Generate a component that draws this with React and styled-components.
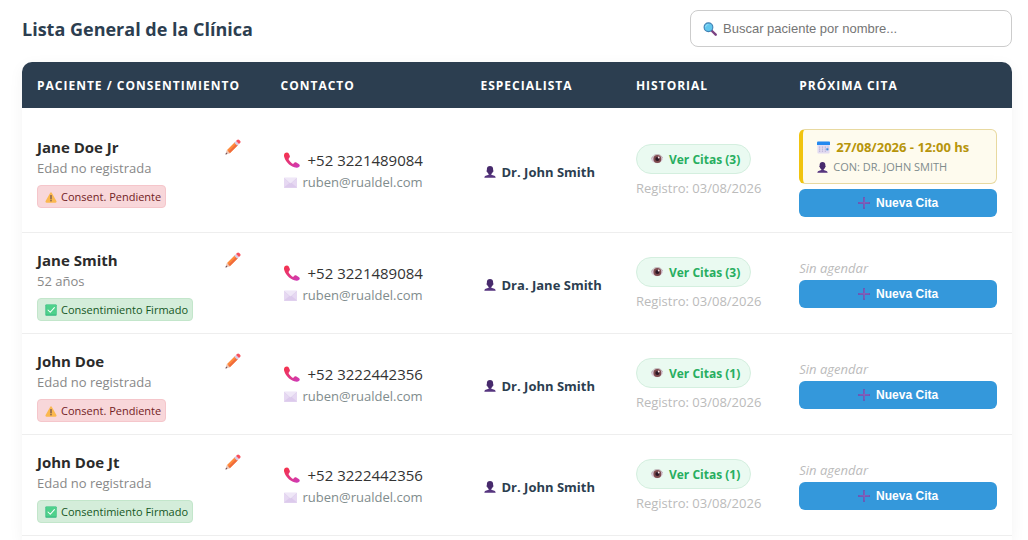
import React, { useId, useState } from 'react';
import styled, { createGlobalStyle, css } from 'styled-components';

const GlobalStyle = createGlobalStyle`
  *, *::before, *::after { box-sizing: border-box; }
  body {
    margin: 0;
    background: #fff;
    color: #333;
    font-family: 'Open Sans', 'Noto Sans', sans-serif;
    font-size: 13px;
  }
  button, input { margin: 0; font-family: 'Liberation Sans', Arial, sans-serif; }
`;

const Page = styled.main`
  display: flex;
  flex-direction: column;
  min-height: 100vh;
  padding: 10px 16px 0 22px;
`;

const TopBar = styled.header`
  display: flex;
  justify-content: space-between;
  align-items: center;
  margin-bottom: 15px;
`;

const Title = styled.h1`
  margin: 0;
  font-size: 18px;
  line-height: 26px;
  font-weight: 700;
  color: #2c3e50;
`;

const SearchBox = styled.label`
  display: flex;
  align-items: center;
  gap: 6px;
  width: 322px;
  height: 37px;
  padding: 0 12px;
  border: 1px solid #ccc;
  border-radius: 8px;
  background: #fff;
`;

const SearchInput = styled.input`
  flex: 1;
  min-width: 0;
  padding: 0;
  border: 0;
  outline: 0;
  background: transparent;
  font-size: 13px;
  color: #333;
  &::placeholder { color: #757575; opacity: 1; }
`;

const Card = styled.section`
  flex: 1;
  border-radius: 10px 10px 0 0;
  background: #fff;
  box-shadow: 0 4px 15px rgba(0, 0, 0, 0.05);
`;

const Table = styled.table`
  width: 100%;
  table-layout: fixed;
  border-collapse: separate;
  border-spacing: 0;
`;

const HeadCell = styled.th`
  width: ${(p) => p.$width};
  height: 46px;
  padding: 0 15px;
  text-align: left;
  font-size: 12px;
  font-weight: 700;
  letter-spacing: 1px;
  text-transform: uppercase;
  color: #fff;
  background: #2c3e50;
  white-space: nowrap;
  &:first-child { border-top-left-radius: 10px; }
  &:last-child { border-top-right-radius: 10px; }
`;

const Cell = styled.td`
  padding: 12px 15px;
  vertical-align: middle;
  border-bottom: 1px solid #eee;
  white-space: nowrap;
`;

const PatientHead = styled.div`
  display: flex;
  justify-content: space-between;
  align-items: center;
  padding: 4px 10px 0 0;
`;

const PatientName = styled.strong`
  font-size: 15px;
  line-height: 22px;
  color: #2b2b2b;
`;

const IconButton = styled.button`
  display: flex;
  padding: 0;
  border: 0;
  background: none;
  cursor: pointer;
`;

const Age = styled.div`
  margin-bottom: 7px;
  line-height: 20px;
  color: #888;
`;

const badgeTones = {
  signed: css`color: #155724; background: #d4edda; border-color: #c3e6cb;`,
  pending: css`color: #721c24; background: #f8d7da; border-color: #f5c6cb;`,
};

const Badge = styled.span`
  display: flex;
  align-items: center;
  gap: 4px;
  width: fit-content;
  height: 23px;
  padding: 0 4px 0 7px;
  border: 1px solid;
  border-radius: 4px;
  font-size: 11px;
  ${(p) => badgeTones[p.$tone]}
`;

const Stack = styled.div`
  padding-top: 2px;
`;

const ContactLine = styled.a`
  display: flex;
  align-items: center;
  gap: ${(p) => (p.$main ? 8 : 6)}px;
  padding-left: 3px;
  line-height: 22px;
  font-size: ${(p) => (p.$main ? 15 : 13)}px;
  color: ${(p) => (p.$main ? '#333' : '#7f8c8d')};
  text-decoration: none;
`;

const Specialist = styled.div`
  display: flex;
  align-items: center;
  gap: 6px;
  padding: 4px 0 0 3px;
  font-weight: 700;
  color: #2c3e50;
`;

const HistoryButton = styled.button`
  display: flex;
  align-items: center;
  gap: 6px;
  height: 30px;
  padding: 0 10px 0 14px;
  border: 1px solid #d4efdf;
  border-radius: 15px;
  background: #eafaf1;
  color: #27ae60;
  font-family: 'Open Sans', 'Noto Sans', sans-serif;
  font-size: 12px;
  font-weight: 700;
  cursor: pointer;
`;

const Registered = styled.div`
  margin-top: 4px;
  line-height: 20px;
  color: #bbb;
`;

const NextStack = styled.div`
  padding: 1px 0 3px;
`;

const Appointment = styled.div`
  height: 55px;
  margin: 8px 0 5px;
  padding: 7px 14px;
  border: 1px solid #e8d9a0;
  border-left: 4px solid #f1c40f;
  border-radius: 6px;
  background: #fefbee;
`;

const AppointmentDate = styled.div`
  display: flex;
  align-items: center;
  gap: 6px;
  line-height: 20px;
  font-weight: 700;
  color: #b7950b;
`;

const AppointmentDoctor = styled.div`
  display: flex;
  align-items: center;
  gap: 5px;
  line-height: 20px;
  font-size: 11px;
  text-transform: uppercase;
  color: #7f8c8d;
`;

const Unscheduled = styled.div`
  line-height: 24px;
  font-size: 13px;
  font-style: italic;
  color: #bbb;
`;

const NewButton = styled.button`
  display: flex;
  align-items: center;
  justify-content: center;
  gap: 6px;
  width: 100%;
  height: 28px;
  padding: 0;
  border: 0;
  border-radius: 6px;
  background: #3498db;
  color: #fff;
  font-size: 12px;
  font-weight: 700;
  cursor: pointer;
`;

const Glyph = styled.svg`
  flex: none;
  width: ${(p) => p.$size}px;
  height: ${(p) => p.$size}px;
`;

function Icon({ size, children }) {
  return <Glyph $size={size} viewBox="0 0 32 32" fill="none" aria-hidden="true">{children}</Glyph>;
}

const SearchIcon = () => (
  <Icon size={14}>
    <path d="m20 20 9 9" stroke="#7b4182" strokeWidth="5.500" strokeLinecap="round" />
    <circle cx="12.500" cy="12" r="10" fill="#62c7ee" stroke="#3f7fb2" strokeWidth="2.500" />
    <path d="M6 11c0-3 2.500-5 5.500-5" stroke="#a2e5fb" strokeWidth="2" strokeLinecap="round" />
  </Icon>
);

const PencilIcon = () => (
  <Icon size={16}>
    <path d="m1 31 2.500-8.500 6 6L1 31Z" fill="#e8bfae" />
    <path d="m1 31 1.200-3.800 2.600 2.600L1 31Z" fill="#594354" />
    <path d="M3.500 22.500 20 6l6 6L9.500 28.500c-.5-2-1.300-2.500-2.800-2.800-.3-1.700-1.200-2.700-3.200-3.200Z" fill="#ff8a3c" />
    <path d="M6.700 25.700 23 9l3 3L9.500 28.500c-.5-2-1.300-2.500-2.800-2.800Z" fill="#f06b3b" />
    <path d="m18.500 7.500 3.500-3.500 6 6-3.500 3.500-6-6Z" fill="#d8cbe6" />
    <path d="m22 4 2-2c1.500-1.500 3-1.300 4.500 0l1.500 1.500c1.500 1.500 1.500 3 0 4.500l-2 2-6-6Z" fill="#f8515d" />
  </Icon>
);

const WarningIcon = () => (
  <Icon size={12}>
    <path d="M13.600 5c1.200-2 3.600-2 4.800 0l12 21.500c1.100 2-.2 4.500-2.600 4.500H4.200C1.800 31 .5 28.500 1.600 26.500L13.600 5Z" fill="#fbb84f" />
    <path d="M16 12v9" stroke="#5a4550" strokeWidth="3" strokeLinecap="round" />
    <circle cx="16" cy="26" r="1.900" fill="#5a4550" />
  </Icon>
);

const CheckIcon = () => (
  <Icon size={12}>
    <rect x="1" y="1" width="30" height="30" rx="2" fill="#35b981" />
    <rect x="3" y="2" width="27" height="26" rx="1" fill="#4ed18b" />
    <path d="m8 16 6 6L25 9.500" stroke="#fff" strokeWidth="2.800" strokeLinecap="round" strokeLinejoin="round" />
  </Icon>
);

function PhoneIcon() {
  const id = useId();
  return (
    <Icon size={16}>
      <linearGradient id={id} x1="4" y1="2" x2="28" y2="30" gradientUnits="userSpaceOnUse">
        <stop stopColor="#f5324c" />
        <stop offset="1" stopColor="#cf3ab5" />
      </linearGradient>
      <path fill={`url(#${id})`} d="M2 2C5 0 8 .5 9.500 3l2 4.500c.8 2 .2 3.500-1.500 5-1.300 1.200-1 2.300.2 4.200 1.500 2.300 3.300 4.200 5.500 5.800 2 1.400 3 1.400 4-.1 1.300-1.800 3-2.200 5-1.200l4.800 2.600c2.400 1.400 2.700 3.700.8 5.700-2.200 2.400-5.600 2.600-9.800 1.200C10.500 27.200 2.500 18.500.2 9-.4 6 .3 3.400 2 2Z" />
    </Icon>
  );
}

const MailIcon = () => (
  <Icon size={13}>
    <rect x="0" y="4" width="32" height="25" rx="1" fill="#e6d8f2" />
    <path d="M0 28 13 17h6l13 11c0 .7-.8 1-2 1H2c-1.200 0-2-.3-2-1Z" fill="#dccaec" />
    <path d="M0 5c0-.7.700-1 1.500-1h29c.8 0 1.500.3 1.500 1L18 17.500c-1.200 1-2.800 1-4 0L0 5Z" fill="#efe7f7" />
    <path d="m1 6 13 11.500c1.200 1 2.800 1 4 0L31 6" stroke="#d6c6e4" strokeWidth="1" />
  </Icon>
);

const PersonIcon = ({ size = 12 }) => (
  <Icon size={size}>
    <path d="M12.500 18h7v5l8 3c2 .8 3.500 2.800 3.500 5.500H1C1 28.800 2.500 26.800 4.500 26l8-3v-5Z" fill="#56357f" />
    <path d="M16 0c5.300 0 8.300 3.300 8.300 8v3c1.400.5 1.400 4-.6 4.600C22.500 20 19.800 22 16 22s-6.500-2-7.700-6.400c-2-.6-2-4.100-.6-4.600V8c0-4.700 3-8 8.300-8Z" fill="#472a6c" />
  </Icon>
);

const EyeIcon = () => (
  <Icon size={12}>
    <path d="M0 17C5 8 10 5 17 5c7 0 12 4 15 11-4 8-9 11-16 11C9 27 4 24 0 17Z" fill="#d9cbd9" />
    <circle cx="17" cy="16" r="10.500" fill="#7d4a4d" />
    <circle cx="17" cy="16" r="5.500" fill="#2c1725" />
    <circle cx="20.500" cy="12" r="2.400" fill="#f4e5ea" />
    <path d="M1 15C6 6 11 4 17 4s11 3 14 9" stroke="#9c7c8a" strokeWidth="1.500" />
  </Icon>
);

const CalendarIcon = () => (
  <Icon size={13}>
    <rect x="1" y="2" width="30" height="29" rx="2.500" fill="#e2dbf1" />
    <path d="M0 3.500C0 1.800 1 1 2.500 1h27C31 1 32 1.800 32 3.500V10H0V3.500Z" fill="#2489ef" />
    <path d="M5 15h3m4 0h3m4 0h3m4 0h2M5 20h3m4 0h3m4 0h3m4 0h2M5 25h3m4 0h3m4 0h3" stroke="#a29dc6" strokeWidth="2" />
    <path d="M23 18h5v5h-5z" fill="#3b8ce0" />
  </Icon>
);

const PlusIcon = () => (
  <Icon size={12}>
    <path d="M16 2v28M2 16h28" stroke="#6a57b5" strokeWidth="5" strokeLinecap="round" />
    <path d="M16.500 3v25M4 15.500h25" stroke="#8f66bd" strokeWidth="2" />
  </Icon>
);

const columns = [
  ['Paciente / Consentimiento', '24.6%'],
  ['Contacto', '20.2%'],
  ['Especialista', '15.7%'],
  ['Historial', '16.5%'],
  ['Próxima cita', '23%'],
];

const patients = [
  {
    name: 'Jane Doe Jr', age: 'Edad no registrada', signed: false, phone: '+52 3221489084',
    doctor: 'Dr. John Smith', visits: 3,
    next: { date: '27/08/2026 - 12:00 hs', doctor: 'Con: Dr. John Smith' },
  },
  { name: 'Jane Smith', age: '52 años', signed: true, phone: '+52 3221489084', doctor: 'Dra. Jane Smith', visits: 3 },
  { name: 'John Doe', age: 'Edad no registrada', signed: false, phone: '+52 3222442356', doctor: 'Dr. John Smith', visits: 1 },
  { name: 'John Doe Jt', age: 'Edad no registrada', signed: true, phone: '+52 3222442356', doctor: 'Dr. John Smith', visits: 1 },
];

function PatientRow({ patient }) {
  const { name, age, signed, phone, doctor, visits, next } = patient;
  return (
    <tr>
      <Cell>
        <PatientHead>
          <PatientName>{name}</PatientName>
          <IconButton type="button" aria-label={`Editar ${name}`}><PencilIcon /></IconButton>
        </PatientHead>
        <Age>{age}</Age>
        <Badge $tone={signed ? 'signed' : 'pending'}>
          {signed ? <CheckIcon /> : <WarningIcon />}
          {signed ? 'Consentimiento Firmado' : 'Consent. Pendiente'}
        </Badge>
      </Cell>
      <Cell>
        <Stack>
          <ContactLine $main href={`tel:${phone.replace(' ', '')}`}><PhoneIcon />{phone}</ContactLine>
          <ContactLine href="mailto:ruben@rualdel.com"><MailIcon />ruben@rualdel.com</ContactLine>
        </Stack>
      </Cell>
      <Cell><Specialist><PersonIcon />{doctor}</Specialist></Cell>
      <Cell>
        <Stack>
          <HistoryButton type="button"><EyeIcon />Ver Citas ({visits})</HistoryButton>
          <Registered>Registro: 03/08/2026</Registered>
        </Stack>
      </Cell>
      <Cell>
        <NextStack>
          {next ? (
            <Appointment>
              <AppointmentDate><CalendarIcon />{next.date}</AppointmentDate>
              <AppointmentDoctor><PersonIcon size={11} />{next.doctor}</AppointmentDoctor>
            </Appointment>
          ) : (
            <Unscheduled>Sin agendar</Unscheduled>
          )}
          <NewButton type="button"><PlusIcon />Nueva Cita</NewButton>
        </NextStack>
      </Cell>
    </tr>
  );
}

export default function App() {
  const [query, setQuery] = useState('');
  const shown = patients.filter((p) => p.name.toLowerCase().includes(query.toLowerCase()));
  return (
    <>
      <GlobalStyle />
      <Page>
        <TopBar>
          <Title>Lista General de la Clínica</Title>
          <SearchBox>
            <SearchIcon />
            <SearchInput
              type="text"
              aria-label="Buscar paciente"
              placeholder="Buscar paciente por nombre..."
              value={query}
              onChange={(e) => setQuery(e.target.value)}
            />
          </SearchBox>
        </TopBar>
        <Card>
          <Table>
            <thead>
              <tr>{columns.map(([label, width]) => <HeadCell key={label} $width={width}>{label}</HeadCell>)}</tr>
            </thead>
            <tbody>{shown.map((p) => <PatientRow key={p.name} patient={p} />)}</tbody>
          </Table>
        </Card>
      </Page>
    </>
  );
}
